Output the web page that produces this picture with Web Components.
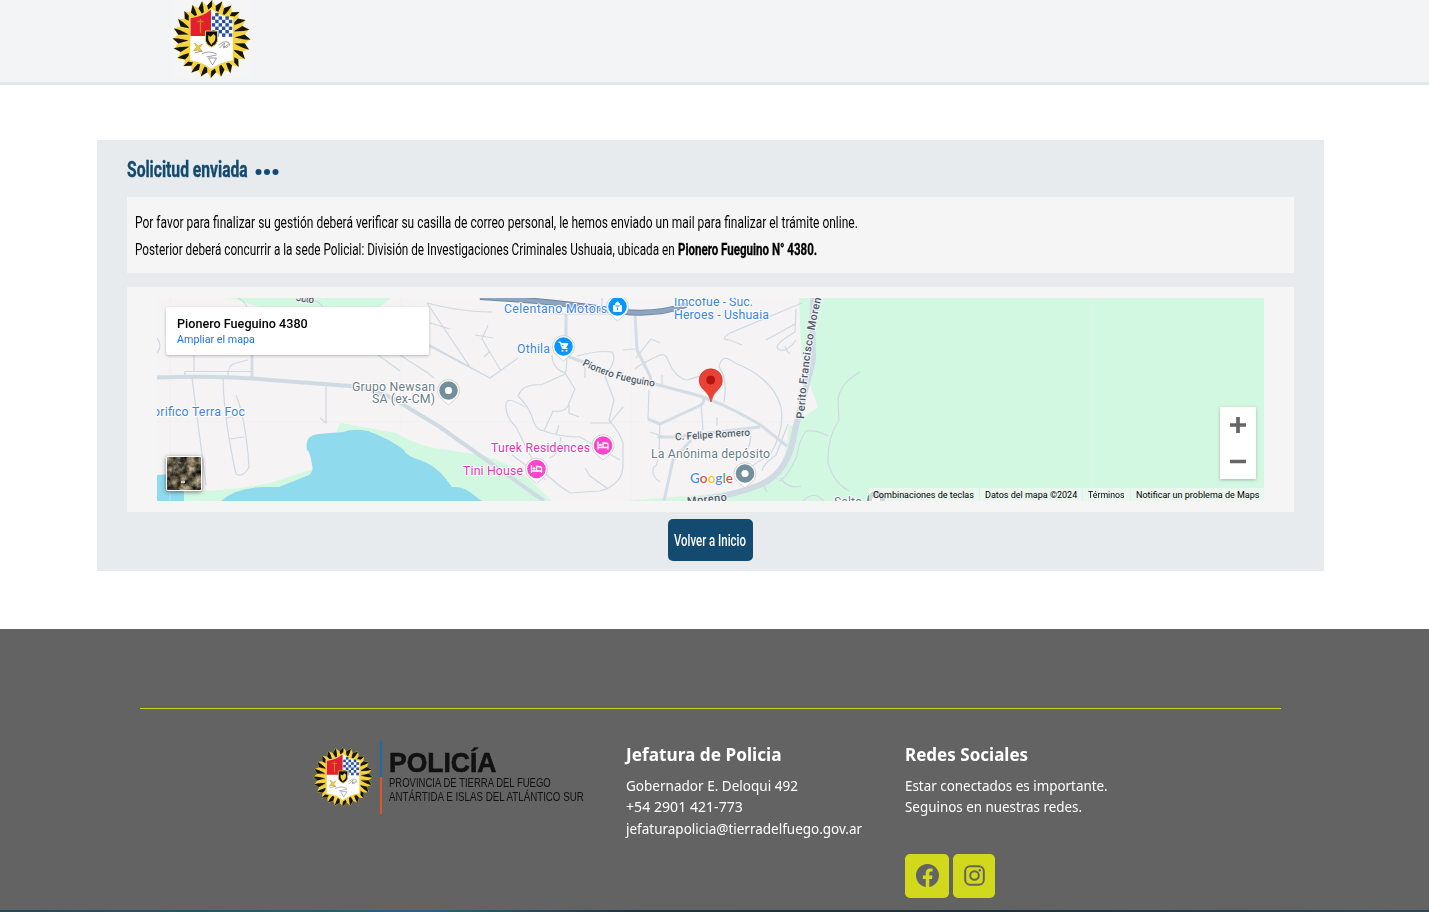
<!DOCTYPE html>
<html lang="es">
<head>
<meta charset="utf-8">
<title>Solicitud enviada</title>
<style>
html,body{margin:0;height:912px;overflow:hidden;background:#fff}
body{font-family:Roboto,"Liberation Sans",sans-serif}
</style>
</head>
<body>
<police-page></police-page>
<script>
const define = (name, html, setup) => {
  const t = document.createElement('template');
  t.innerHTML = html;
  customElements.define(name, class extends HTMLElement {
    connectedCallback() {
      if (this.shadowRoot) return;
      this.attachShadow({mode: 'open'}).append(t.content.cloneNode(true));
      if (setup) setup(this, this.shadowRoot);
    }
  });
};

// One line of text, condensed or widened to the width given in "w".
define('fit-line', `<style>
:host{display:block;white-space:nowrap}
span{display:inline-block;transform-origin:0 50%}
</style><span><slot></slot></span>`, (el, root) => {
  const s = root.querySelector('span'), w = +el.getAttribute('w');
  el.style.width = w + 'px';
  s.style.transform = `scaleX(${w / s.offsetWidth})`;
});

// Police badge: ring of two-tone rays around a quartered shield.
define('police-badge', `<style>:host{display:block}svg{display:block;width:100%;height:100%}</style>
<svg viewBox="-39 -39 78 78"><g id="rays"></g>
<path d="M-22-22Q-10-22 0-31Q10-22 22-22V22Q8 24 0 31Q-8 24-22 22Z" fill="#fff" stroke="#f6d33c" stroke-width="1.6"/>
<path d="M-21-21Q-9-22-.5-29.5V-3H-21Z" fill="#e41f2d"/>
<g id="checks"></g>
<path d="M-11-20V-6M-14-17.5H-8" stroke="#b98b1b" stroke-width="1.3"/>
<path d="M-17 4L-13 7L-9 5L-12 9L-9 13L-14 11L-18 12L-15 8Z" fill="#f0ca3c" stroke="#a08a35" stroke-width=".5"/>
<path d="M-17 14L-10 12M-10 15Q-3 11 5 15M-5 18L5 16M-3 19L1 26L5 19ZM7 6L12 3Q18 2 18 6Q15 10 12 7M8 9L13 4L12 9L17 5" fill="none" stroke="#777" stroke-width=".7"/>
<path d="M-6-8H6V2Q5 6 0 8Q-5 6-6 2Z" fill="#111" stroke="#f1d044" stroke-width="1"/>
<path d="M-3-4Q-1-1 0-3L2-5L4-3Q4 3 1 4L0 6L-2 3Q-4 1-3-4Z" fill="#f6d33c"/></svg>`, (el, root) => {
  let h = '', n = 24;
  const p = (r, a) => `${(r * Math.sin(a)).toFixed(2)} ${(-r * Math.cos(a)).toFixed(2)}`;
  for (let i = 0; i < n; i++) {
    const a = i * 2 * Math.PI / n, d = Math.PI / n;
    h += `<path fill="#f6d33c" d="M${p(20, a - d)}L${p(33.5, a - d)}L${p(39, a)}L${p(33.5, a + d)}L${p(20, a + d)}Z"/>` +
         `<path fill="#151512" d="M${p(23, a - d * .5)}L${p(33.5, a - d * 1.05)}L${p(39, a + d * .15)}L${p(33, a + d * .1)}Z"/>`;
  }
  root.querySelector('#rays').innerHTML = h;
  let c = '';
  for (let y = 0; y < 7; y++) for (let x = 0; x < 6; x++)
    if ((x + y) % 2 && !(y == 0 && x > 2)) c += `<rect x="${.3 + x * 3.4}" y="${-26 + y * 3.4}" width="3.4" height="3.4" fill="#2450a0"/>`;
  root.querySelector('#checks').innerHTML = c;
});

define('site-header', `<style>
:host{display:block;box-sizing:border-box;height:85px;background:#f3f4f6;border-bottom:3px solid #e5e6e8;padding-left:172px}
div{width:79px;height:78px;background:#f5f5f5}
police-badge{width:79px;height:78px}
</style><div><police-badge></police-badge></div>`);

define('map-view', `<style>
:host{display:block;position:relative;width:1107px;height:203px;overflow:hidden;font-family:Roboto,sans-serif}
svg{display:block}
.card{position:absolute;left:9px;top:9px;width:263px;height:48px;box-sizing:border-box;padding:9px 11px;background:#fff;border-radius:2px;box-shadow:0 1px 3px rgba(0,0,0,.25)}
.t{font-size:13px;line-height:16px;font-weight:500;color:#000}
.l{font-size:11px;line-height:15px;color:#1a73e8}
.zoom{position:absolute;right:8px;top:109px;width:36px;height:72px;background:#fff;box-shadow:0 1px 3px rgba(0,0,0,.25)}
.sat{position:absolute;left:9px;top:158px;width:34px;height:33px;border:1px solid #fff;border-radius:2px;box-shadow:0 1px 4px rgba(0,0,0,.5);overflow:hidden}
.legal{position:absolute;right:0;bottom:0;height:13px;display:flex;gap:1px;font-size:9px;line-height:14px;color:#000}
.legal div{background:rgba(245,245,245,.7);padding:0 5px}
.legal div:first-child{padding-left:4px}
.lab{font:12.3px Roboto,sans-serif;paint-order:stroke;stroke:#fff;stroke-width:2px;stroke-linejoin:round}
.st{font:500 10px Roboto,sans-serif;fill:#4c5b68;paint-order:stroke;stroke:#f5f3f4;stroke-width:2px}
</style>
<svg width="1107" height="203" viewBox="157 298 1107 203">
<defs>
<path id="pf" d="M582 365Q612 381 658 387"/>
<path id="pm" d="M804 419Q808 352 822 296"/>
<g id="drop"><path d="M0 14.500L-6.500 9A11 11 0 1 1 6.500 9Z" fill="#fff" stroke="#bbb" stroke-width=".6"/></g>
</defs>
<rect x="157" y="298" width="1107" height="203" fill="#f5f3f4"/>
<path d="M229 298L260 307H380L391 298Z" fill="#d3f8e2"/>
<path d="M799 298L801 345L803 365L818 407L798 421L789 427Q785 470 770 481Q755 489 700 495L660 498L625 501H1264V298Z" fill="#d3f8e2"/>
<path d="M184 501V492Q240 490 270 483L340 460L341 423L396 433Q422 448 448 450L485 456Q515 465 530 480L552 501Z" fill="#d3f8e2"/>
<path d="M336 433L340 423L375 431Z" fill="#d3f8e2"/>
<path d="M157 475L184 473V501H157ZM221 501Q235 488 262 487H279L309 475Q314 471 312 465Q310 451 307 450Q304 436 318 434Q330 433 344 432Q352 428 368 431Q390 439 404 450Q406 456 420 460Q435 465 446 479L452 487Q465 486 475 496L482 501Z" fill="#90daee"/>
<path d="M170 298V501M401 298V430M631 298V501M157 422H800M1093 298V488" stroke="#eeedef" stroke-width=".5" fill="none"/>
<g fill="none" stroke="#cfd9e1" stroke-width="1.2">
<path d="M194 355V371M185 375V371.500H252M228 376Q228 364 236 363L248 360M192 378L206 485M223 378Q224 420 236 474Q243 478 249 467Q246 420 236 395M226 418L233 417M229 439L244 437M326 386V423L320 418M157 338Q163 346 157 353M238 298Q246 302 247 308M310 299Q320 302 323 307"/>
<path d="M427 303L470 367L490 378L518 358M427 303Q460 312 492 312M430 323L450 329M430 345L470 367M378 355L400 371M400 355Q420 368 428 373L434 378M482 339L501 371M482 339L488 325M475 335L493 338M484 357L490 351M427 345L490 378M550 314H635"/>
<path d="M567 357Q566 375 565 374L541 385Q523 383 518 396Q530 407 534 423Q537 430 544 431L553 411Q567 413 569 403L575 389L565 373Q552 368 552 355M569 405V413L579 417M525 407Q506 395 506 405Q505 416 516 427L533 461Q550 480 570 493L600 491Q622 485 623 466V443Q620 433 609 420L614 400L605 376Q618 360 612 352Q600 350 577 356M585 367V378M544 431Q560 437 580 437L620 460M556 435L559 425M561 437Q559 455 549 458M512 455L546 480M585 468L590 476L608 489M590 423H610L623 407M602 298V314M623 350L635 349"/>
<path d="M635 369Q640 364 660 355Q665 353 668 360Q675 378 687 380Q704 375 705 374M662 386V375M724 402Q728 378 719 367Q722 352 735 363Q773 378 781 407Q785 430 770 455Q750 466 748 470M802 303L730 333Q719 340 730 340L742 345M796 309L795 332Q773 345 778 349Q786 354 796 340M766 340L795 324M785 346Q788 354 790 353M701 403L703 430M717 417V426M649 390L648 419L660 424L659 450Q658 466 654 467Q650 475 660 482M636 358L651 339L660 343M751 436Q749 453 740 457M762 481Q765 490 767 492M780 478Q790 490 801 486M788 424L776 455Q760 467 763 471M860 372Q840 383 838 400L839 420Q827 438 828 463Q835 485 850 491M828 436Q818 430 806 431Q799 440 797 456Q787 478 779 481M803 501Q814 490 824 501M650 432L665 437"/>
</g>
<g fill="none" stroke="#d3dde5" stroke-linejoin="round">
<path d="M252 355V378" stroke-width="3"/>
<path d="M157 377.500Q220 375 270 380L350 386Q385 391 407 407L440 427L544 501" stroke="#cfdae3" stroke-width="4"/>
<path d="M566 314V356M635 314L637 350L650 376L652 386" stroke-width="3"/>
<path d="M567 356L586 363M655 384L700 396L723 405Q754 420 763 427L787 446M704 398Q704 404 699 406L660 424L648 419M659 435V437H674L760 427M691 440L673 460L664 501" stroke-width="3"/>
<path d="M813 298Q812 330 813 360L795 430Q789 475 757 486Q732 496 690 501" stroke="#cfdae3" stroke-width="6"/>
</g>
<path d="M480 297Q550 301 604 309Q650 318 686 305" fill="none" stroke="#6f87a6" stroke-width="6"/>
<path d="M480 297Q550 301 604 309Q650 318 686 305" fill="none" stroke="#8ea5c2" stroke-width="4"/>
<g class="lab">
<g fill="#3b82e8">
<text x="504" y="312.500" textLength="103">Celentano Motors</text>
<text x="517" y="353" textLength="33">Othila</text>
<text x="674" y="306" textLength="79">Imcofue - Suc.</text>
<text x="674" y="318.500" textLength="95">Heroes - Ushuaia</text>
<text x="153" y="415.500" textLength="92">orifico Terra Foc</text></g>
<g fill="#6b7d86">
<text x="352" y="391" textLength="83">Grupo Newsan</text>
<text x="372" y="403" textLength="63">SA (ex-CM)</text>
<text x="651" y="458" textLength="119">La Anónima depósito</text>
<text x="834" y="506">Salto</text></g>
<g fill="#e833b5">
<text x="491" y="452" textLength="99">Turek Residences</text>
<text x="463" y="475" textLength="60">Tini House</text></g>
</g>
<g class="st">
<text><textPath href="#pf" textLength="76">Pionero Fueguino</textPath></text>
<text style="font-size:11px"><textPath href="#pm" textLength="122">Perito Francisco Moren</textPath></text>
<text transform="rotate(-3.500 712 434)" x="675" y="438" textLength="75">C. Felipe Romero</text>
<text transform="rotate(-7 706 500)" x="687" y="503" textLength="40" style="font-size:11px">Moreno</text>
<text transform="rotate(8 305 300)" x="296" y="302" textLength="18">Juto</text></g>
<g transform="translate(617.500 306.500)"><use href="#drop"/><circle r="9.300" fill="#0796ff"/><path d="M-4-1H4V5H-4ZM-2-1V-3Q0-6 2-3V-1" fill="#fff" stroke="#fff" stroke-width=".8"/><path d="M-2-.5H2M0 1V3.500" stroke="#0796ff"/></g>
<g transform="translate(563.500 346.500)"><use href="#drop"/><circle r="9.300" fill="#0796ff"/><path d="M-5-4.500H-3L-1 2H4M-2.500-3H4.500L3 0H-2Z" fill="#fff" stroke="#fff"/><circle cx="-1" cy="4.200" r="1" fill="#fff"/><circle cx="3" cy="4.200" r="1" fill="#fff"/></g>
<g transform="translate(448.500 390.500)"><use href="#drop"/><circle r="9.300" fill="#748f9c"/><circle r="3.600" fill="#fff"/></g>
<g transform="translate(745 473.500)"><use href="#drop"/><circle r="9.300" fill="#748f9c"/><circle r="3.600" fill="#fff"/></g>
<g transform="translate(876 500)"><circle r="9.500" fill="#748f9c" stroke="#fff"/><circle r="4" fill="#fff"/></g>
<g id="bed" transform="translate(603 445.500)"><use href="#drop"/><circle r="9.300" fill="#f946cb"/><path d="M-5-4V4M-5 2H5V4M5 2V-1.500Q4.500-2.500 0-2.500V2" stroke="#fff" stroke-width="1.300" fill="none"/><circle cx="-2.500" cy="-.5" r="1.300" fill="#fff"/></g>
<use href="#bed" transform="translate(-66.500 23.500)"/>
<path d="M711 402Q710 395 703 389A11.600 11.600 0 1 1 718.500 389Q712 395 711 402Z" fill="#ea4335" stroke="#c5221f" stroke-width=".6"/><circle cx="710.700" cy="380" r="4.500" fill="#b31412"/>
<text x="690" y="482.500" textLength="43" lengthAdjust="spacingAndGlyphs" style="font:500 13px Lato,sans-serif;paint-order:stroke;stroke:#fff;stroke-width:2px"><tspan fill="#4285f4">G</tspan><tspan fill="#ea4335">o</tspan><tspan fill="#fbbc04">o</tspan><tspan fill="#4285f4">g</tspan><tspan fill="#34a853">l</tspan><tspan fill="#ea4335">e</tspan></text>
</svg>
<div class="card"><fit-line class="t" w="131">Pionero Fueguino 4380</fit-line><fit-line class="l" w="78">Ampliar el mapa</fit-line></div>
<div class="sat"><svg width="34" height="33"><filter id="n" x="0" y="0" width="1" height="1" color-interpolation-filters="sRGB"><feTurbulence type="fractalNoise" baseFrequency=".14" numOctaves="4" seed="4"/><feColorMatrix values="1.1 .3 0 0 -.31  1 .3 0 0 -.29  .8 .3 0 0 -.26  0 0 0 0 1"/></filter><rect width="34" height="33" filter="url(#n)"/><path d="M10 6L17 8L14 12Z" fill="#303a31"/><path d="M14 24H18V26H14Z" fill="#d1cfbd"/></svg></div>
<div class="zoom"><svg width="36" height="72"><path d="M10 18H26M18 10V26M10 54.500H26" stroke="#666" stroke-width="3.700"/></svg></div>
<div class="legal"><div><fit-line w="101">Combinaciones de teclas</fit-line></div><div><fit-line w="92">Datos del mapa ©2024</fit-line></div><div><fit-line w="37">Términos</fit-line></div><div><fit-line w="123">Notificar un problema de Maps</fit-line></div></div>`);

define('request-panel', `<style>
:host{display:block;box-sizing:border-box;width:1227px;height:431px;margin:55px 0 0 97px;padding:0 30px;background:#e8ebee;color:#000}
h1{margin:0;height:57px;display:flex;align-items:center;gap:7px;font-size:22px;line-height:28px;color:#134b70;-webkit-text-stroke:.4px #134b70}
h1 fit-line{margin-top:3px}
h1 svg{margin-top:7px}
.msg{box-sizing:border-box;height:76px;padding:12px 7.500px;background:#f5f5f5;font-size:16.5px;line-height:27px}
.row{display:flex;gap:3px}
.map{margin-top:14px;padding:11px 30px;background:#f5f5f5}
button{display:block;margin:7px auto 0;width:85px;height:42px;border:0;border-radius:5px;padding:0 6px;background:#134b70;color:#fff;font:500 16.500px Roboto,sans-serif}
</style>
<h1><fit-line w="121">Solicitud enviada</fit-line><svg width="25" height="8"><g fill="#134b70" stroke="none"><circle cx="3.500" cy="4" r="3"/><circle cx="12" cy="4" r="3"/><circle cx="20.500" cy="4" r="3"/></g></svg></h1>
<div class="msg"><fit-line w="723">Por favor para finalizar su gestión deberá verificar su casilla de correo personal, le hemos enviado un mail para finalizar el trámite online.</fit-line>
<div class="row"><fit-line w="540">Posterior deberá concurrir a la sede Policial: División de Investigaciones Criminales Ushuaia, ubicada en</fit-line><fit-line w="139" style="font-weight:700;-webkit-text-stroke:.3px #000">Pionero Fueguino N° 4380.</fit-line></div></div>
<div class="map"><map-view></map-view></div>
<button><fit-line w="72">Volver a Inicio</fit-line></button>`);

define('police-logo', `<style>
:host{display:grid;grid-template-columns:60px 2px 196px;column-gap:7px;width:272px;height:73px;color:#111;font-family:"Liberation Sans",sans-serif}
police-badge{width:60px;height:60px;margin-top:6px}
i{background:linear-gradient(#1b6ca8 50%,#d8572b 50%)}
.n{font-size:27px;font-weight:700;line-height:26px;margin-top:9px;-webkit-text-stroke:.6px #111}
.s{font-size:12.400px;line-height:14px}
</style><police-badge></police-badge><i></i><div><fit-line class="n" w="108">POLICÍA</fit-line><fit-line class="s" w="162">PROVINCIA DE TIERRA DEL FUEGO</fit-line><fit-line class="s" w="195">ANTÁRTIDA E ISLAS DEL ATLÁNTICO SUR</fit-line></div>`);

define('footer-column', `<style>
:host{display:block;color:#fff;font:14px/21.400px "Noto Sans","Open Sans",sans-serif}
h2{margin:0 0 8px;font-size:18px;line-height:26px;font-weight:700}
</style><h2><slot name="title"></slot></h2><slot></slot>`);

define('social-button', `<style>
:host{display:flex;align-items:center;justify-content:center;height:44px;border-radius:5px;background:#d2d91d;color:#636363}
svg,::slotted(svg){margin-bottom:2px}
</style><slot></slot>`);

define('site-footer', `<style>
:host{display:block;box-sizing:border-box;height:283px;margin-top:58px;padding:79px 148px 0 140px;background:#636363;border-bottom:2px solid #1c3a4d;border-image:linear-gradient(90deg,#24485c,#2d5f7d 30%,#1b3343 45%,#1a3040 70%,#28495e) 1}
.rule{height:1px;background:#c9d11f}
.cols{display:grid;grid-template-columns:313px 279px 1fr;padding-left:173px;margin-top:32px}
.soc{display:flex;gap:4px;margin-top:36.200px}
</style><div class="rule"></div><div class="cols"><police-logo></police-logo>
<footer-column><fit-line slot="title" w="156">Jefatura de Policia</fit-line><fit-line w="172">Gobernador E. Deloqui 492</fit-line><fit-line w="117">+54 2901 421-773</fit-line><fit-line w="236">jefaturapolicia@tierradelfuego.gov.ar</fit-line></footer-column>
<footer-column><fit-line slot="title" w="123">Redes Sociales</fit-line><fit-line w="203">Estar conectados es importante.</fit-line><fit-line w="177">Seguinos en nuestras redes.</fit-line>
<div class="soc"><social-button style="width:44px"><svg width="23" height="23" viewBox="0 0 16 16"><path fill="currentColor" d="M16 8.049c0-4.446-3.582-8.050-8-8.050C3.580 0-.002 3.603-.002 8.050c0 4.017 2.926 7.347 6.750 7.951v-5.625h-2.030V8.050H6.750V6.275c0-2.017 1.195-3.131 3.022-3.131.876 0 1.791.157 1.791.157v1.980h-1.009c-.993 0-1.303.621-1.303 1.258v1.510h2.218l-.354 2.326H9.250V16c3.824-.604 6.750-3.934 6.750-7.951z"/></svg></social-button>
<social-button style="width:42px"><svg width="21" height="21" fill="none" stroke="currentColor" stroke-width="2"><rect x="1.200" y="1.200" width="18.600" height="18.600" rx="5"/><circle cx="10.500" cy="10.500" r="4.300"/><circle cx="15.800" cy="5.200" r="1.200" fill="currentColor" stroke="none"/></svg></social-button></div></footer-column></div>`);

define('police-page', `<style>:host{display:block;height:912px;overflow:hidden}request-panel{margin-top:55px}</style>
<site-header></site-header><request-panel></request-panel><site-footer></site-footer>`);
</script>
</body>
</html>
